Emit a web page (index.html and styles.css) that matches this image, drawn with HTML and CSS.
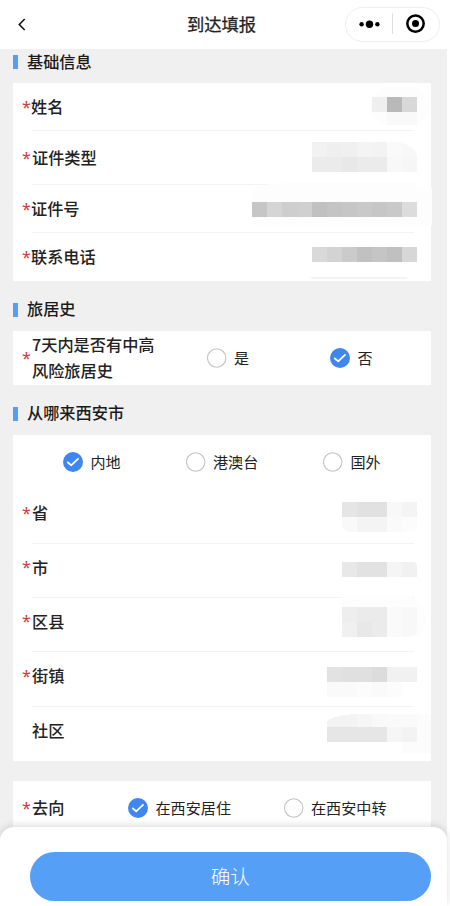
FILE: index.html
```
<!DOCTYPE html>
<html lang="zh-CN">
<head>
<meta charset="utf-8">
<title>到达填报</title>
<link rel="stylesheet" href="styles.css">
</head>
<body>
<svg width="0" height="0" class="defs">
  <symbol id="on" viewBox="0 0 20 20"><circle cx="10" cy="10" r="10" fill="#3f86ef"/><path d="M4.300 10 8.200 13.300 15.500 6.400" fill="none" stroke="#fff" stroke-width="1.8"/></symbol>
  <symbol id="off" viewBox="0 0 20 20"><circle cx="9.700" cy="10" r="9.2" fill="#fff" stroke="#c4c4c4" stroke-width="1.1"/></symbol>
</svg>
<div class="app">
  <header class="nav">
    <svg class="back" width="8" height="13" viewBox="0 0 8 13"><path d="M6.7 1 1.3 6.5 6.7 12" fill="none" stroke="#111" stroke-width="1.6"/></svg>
    <h1>到达填报</h1>
    <div class="capsule">
      <svg width="94" height="34" viewBox="0 0 94 34"><circle cx="15.600" cy="16.200" r="2.2"/><circle cx="23.500" cy="16.200" r="3.7"/><circle cx="31.400" cy="16.200" r="2.2"/><path d="M46.500 5.500V26" stroke="#ddd"/><circle cx="69.500" cy="15.600" r="8.200" fill="none" stroke="#000" stroke-width="2.500"/><circle cx="69.500" cy="15.600" r="3.500"/></svg>
    </div>
  </header>
  <main>
    <h2 class="first">基础信息</h2>
    <section class="card">
      <div class="row r48"><i>*</i><label class="near">姓名</label>
        <svg class="mask m14" width="45" height="28" shape-rendering="crispEdges"><rect x="-2" y="-10" width="60" height="38" rx="19" fill="#fdfdfd"/><path fill="#efefef" d="M0 0h15v15H0z"/><path fill="#b9b9b9" d="M15 0h15v15H15z"/><path fill="#d8d8d8" d="M30 0h15v15H30z"/><path fill="#f9f9f9" d="M15 15h30v13H15z"/></svg></div>
      <div class="row r54"><i>*</i><label>证件类型</label>
        <svg class="mask m11" width="105" height="30" shape-rendering="crispEdges"><path fill="#f2f2f2" d="M0 0h15v15H0z"/><path fill="#efefef" d="M15 0h15v15H15z"/><path fill="#f0f0f0" d="M30 0h15v15H30z"/><path fill="#f4f4f4" d="M45 0h15v15H45z"/><path fill="#f3f3f3" d="M60 0h15v15H60z"/><path fill="#fafafa" d="M75 0h15v15H75z"/><path fill="#f8f8f8" d="M90 1q12 3 15 12v2H90z"/><path fill="#ebebeb" d="M0 15h75v15H0z"/><path fill="#e8e8e8" d="M30 15h15v15H30z"/><path fill="#f8f8f8" d="M75 15h15v15H75z"/><path fill="#f6f6f6" d="M90 15h15v15H90z"/></svg></div>
      <div class="row r48"><i>*</i><label class="near">证件号</label>
        <svg class="mask m17" width="165" height="15" shape-rendering="crispEdges"><path fill="#fdfdfd" d="M0-14Q20-20 60-20H165v6h15v37H0z"/><path fill="#c6c6c6" d="M0 0h15v15H0z"/><path fill="#d5d5d5" d="M15 0h15v15H15z"/><path fill="#cecece" d="M30 0h15v15H30z"/><path fill="#d0d0d0" d="M45 0h15v15H45z"/><path fill="#c1c1c1" d="M60 0h15v15H60z"/><path fill="#c4c4c4" d="M75 0h15v15H75z"/><path fill="#c6c6c6" d="M90 0h15v15H90z"/><path fill="#c9c9c9" d="M105 0h15v15h-15z"/><path fill="#c6c6c6" d="M120 0h15v15h-15z"/><path fill="#c9c9c9" d="M135 0h15v15h-15z"/><path fill="#dcdcdc" d="M150 0h15v15h-15z"/></svg></div>
      <div class="row r48 last"><i>*</i><label class="near">联系电话</label>
        <svg class="mask m14" width="105" height="15" shape-rendering="crispEdges"><path fill="#d9d9d9" d="M0 0h15v15H0z"/><path fill="#d3d3d3" d="M15 0h15v15H15z"/><path fill="#cbcbcb" d="M30 0h15v15H30z"/><path fill="#c1c1c1" d="M45 0h15v15H45z"/><path fill="#c5c5c5" d="M60 0h15v15H60z"/><path fill="#c0c0c0" d="M75 0h15v15H75z"/><path fill="#d7d7d7" d="M90 0h15v15H90z"/><path fill="#f2f2f2" d="M-3 30h100l-4 2H1z"/></svg></div>
    </section>

    <h2>旅居史</h2>
    <section class="card risk">
      <i>*</i><label>7天内是否有中高<br>风险旅居史</label>
      <span class="radio"><svg><use href="#off"/></svg><span>是</span></span>
      <span class="radio"><svg><use href="#on"/></svg><span>否</span></span>
    </section>

    <h2>从哪来西安市</h2>
    <section class="card">
      <div class="origins">
        <span class="radio"><svg><use href="#on"/></svg><span>内地</span></span>
        <span class="radio"><svg><use href="#off"/></svg><span>港澳台</span></span>
        <span class="radio"><svg><use href="#off"/></svg><span>国外</span></span>
      </div>
      <div class="row r55 up"><i>*</i><label>省</label>
        <svg class="mask m13" width="75" height="30" shape-rendering="crispEdges"><path fill="#e5e5e5" d="M0 0h15v15H0z"/><path fill="#e1e1e1" d="M15 0h30v15H15z"/><path fill="#f8f8f8" d="M45 0h15v15H45z"/><path fill="#f4f4f4" d="M60 0h15v15H60z"/><path fill="#f9f9f9" d="M0 15h15v15H5l-5-5z"/><path fill="#f4f4f4" d="M15 15h30v15H15z"/><path fill="#fafafa" d="M45 15h15v15H45z"/><path fill="#fcfcfc" d="M60 15h15v12l-4 3H60z"/></svg></div>
      <div class="row r54 up"><i>*</i><label>市</label>
        <svg class="mask m18" width="75" height="15" shape-rendering="crispEdges"><path fill="#e8e8e8" d="M0 0h15v15H0z"/><path fill="#e2e2e2" d="M15 0h30v15H15z"/><path fill="#f5f5f5" d="M45 0h15v15H45z"/><path fill="#f1f1f1" d="M60 0h12l3 3v12H60z"/></svg></div>
      <div class="row r54 up"><i>*</i><label>区县</label>
        <svg class="mask m9" width="75" height="30" shape-rendering="crispEdges"><path fill="#fdfdfd" d="M0-11H65Q84-6 84 12T65 30H0z"/><path fill="#eee" d="M0 0h15v15H0z"/><path fill="#ebebeb" d="M15 0h30v30H15z"/><path fill="#fafafa" d="M45 0h15v30H45z"/><path fill="#f8f8f8" d="M60 0h15v26q-5 4-10 4h-5z"/><path fill="#f0f0f0" d="M0 15h15v15H0z"/><path fill="#e8e8e8" d="M15 15h15v15H15z"/></svg></div>
      <div class="row r55 up"><i>*</i><label>街镇</label>
        <svg class="mask m15" width="90" height="30" shape-rendering="crispEdges"><path fill="#e2e2e2" d="M0 0h15v15H0z"/><path fill="#e0e0e0" d="M15 0h30v15H15z"/><path fill="#dcdcdc" d="M45 0h15v15H45z"/><path fill="#f1f1f1" d="M60 0h30v15H60z"/><path fill="#fafafa" d="M0 15h30v15H0z"/><path fill="#fcfcfc" d="M30 15h45v15H30z"/><path fill="#fafafa" d="M45 15h15v15H45z"/></svg></div>
      <div class="row r54 up last"><i></i><label>社区</label>
        <svg class="mask m7" width="90" height="28" shape-rendering="crispEdges"><path fill="#fcfcfc" d="M75 0h29v39H75z"/><path fill="#f3f3f3" d="M0 7Q8 1 30 0v13H0z"/><path fill="#f6f6f6" d="M30 0h15v13H30z"/><path fill="#f9f9f9" d="M45 0h15v13H45z"/><path fill="#fafafa" d="M60 0h30v13H60z"/><path fill="#e6e6e6" d="M0 13h60v15H0z"/><path fill="#f6f6f6" d="M60 13h15v15H60z"/><path fill="#f3f3f3" d="M75 13h15v15H75z"/></svg></div>
    </section>

    <section class="card going">
      <i>*</i><label>去向</label>
      <span class="radio"><svg><use href="#on"/></svg><span>在西安居住</span></span>
      <span class="radio"><svg><use href="#off"/></svg><span>在西安中转</span></span>
    </section>
  </main>
  <footer><button>确认</button></footer>
</div>
</body>
</html>
```
FILE: styles.css
```
* { box-sizing: border-box; }
body { margin: 0; background: #fff; font-family: "Noto Sans CJK SC", sans-serif; color: #222; overflow: hidden; }
.defs { display: block; }
.app { width: 447px; height: 906px; display: flex; flex-direction: column; background: #f0f0f0; }
.nav { height: 49px; flex: none; display: flex; align-items: center; background: #fff; padding: 0 7px 0 18px; }
.back { flex: none; }
h1 { margin: 0 0 2px 161px; font-size: 17.3px; line-height: 24px; font-weight: 400; -webkit-text-stroke: .25px #222; white-space: nowrap; }
.capsule { margin-left: auto; width: 95px; height: 35px; border: 1px solid #eee; border-radius: 18px; margin-top: -1px; }
.capsule svg { display: block; }
main { flex: 1; min-height: 0; overflow: hidden; padding: 0 16px 0 13px; }
h2 { margin: 0; height: 50px; padding-top: 4px; display: flex; align-items: center; gap: 9px; font-size: 16.2px; line-height: 24px; font-weight: 500; color: #1a1a1a; }
h2::before { content: ""; width: 5px; height: 14px; background: #559ef6; margin-top: 4px; }
h2.first { height: 34px; padding: 0 0 10px; }
h2.first::before { margin-top: 2px; }
.card { background: #fff; }
.row { display: flex; align-items: center; padding-left: 9px; background: linear-gradient(#f3f3f3, #f3f3f3) 19px 100% / 382px 1px no-repeat; }
.row.last { background: none; }
.row.up { padding-bottom: 6px; }
.r48 { height: 48px; }
.r54 { height: 54px; }
.r55 { height: 55px; }
i { width: 10px; flex: none; font-family: "Noto Sans", sans-serif; font-style: normal; font-size: 16px; line-height: 24px; color: #cf3a42; padding-bottom: 1px; }
label { font-size: 16.2px; line-height: 26px; font-weight: 500; white-space: nowrap; margin-bottom: 2px; }
.up label { margin-bottom: 3px; }
.up i { padding-bottom: 2px; }
label.near { margin-left: -1px; }
.mask { margin: 0 14px 0 auto; align-self: flex-start; overflow: visible; flex: none; }
.m7 { margin-top: 7px; }
.m9 { margin-top: 9px; }
.m11 { margin-top: 11px; }
.m13 { margin-top: 13px; }
.m14 { margin-top: 14px; }
.m15 { margin-top: 15px; }
.m17 { margin-top: 17px; }
.m18 { margin-top: 18px; }
.radio { display: flex; align-items: center; gap: 7.500px; font-size: 15.1px; line-height: 22px; white-space: nowrap; }
.radio span { margin-bottom: 2px; }
.radio svg { width: 20px; height: 20px; flex: none; }
.risk { height: 54px; display: grid; grid-template-columns: 10px 174.500px 123.500px auto; align-items: center; padding-left: 9px; }
.origins { height: 54px; display: grid; grid-template-columns: 122.500px 137.500px auto; align-items: center; padding-left: 50px; }
.going { margin-top: 20px; height: 54px; display: grid; grid-template-columns: 10px 96px 155.500px auto; align-items: center; padding-left: 9px; }
footer { position: relative; height: 79px; flex: none; background: #fff; border-radius: 14px 14px 0 0; padding: 25px 16px 0 29.500px; box-shadow: 0 -2px 7px rgba(0,0,0,.13); }
button { display: block; width: 401.500px; height: 49px; border: 0; border-radius: 25px; background: #569ff6; color: #fff; font-family: inherit; font-size: 19.5px; font-weight: 300; padding: 0 0 2px; }
```
